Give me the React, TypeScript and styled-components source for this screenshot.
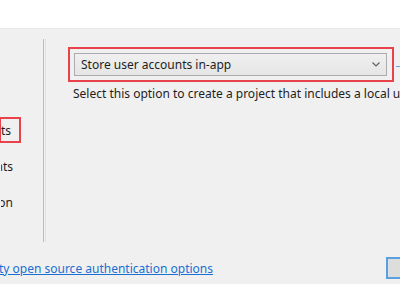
import styled, { createGlobalStyle } from "styled-components";

const GlobalStyle = createGlobalStyle`
  html, body {
    margin: 0;
    padding: 0;
    background: #f0f0f0;
  }
  body {
    font-family: "Noto Sans", "Open Sans", sans-serif;
    color: #1e1e1e;
  }
`;

const Page = styled.div`
  width: 400px;
  height: 284px;
  overflow: hidden;
  background: #f0f0f0;
`;

const TopBand = styled.div`
  height: 29px;
  background: #ffffff;
  border-bottom: 1px solid #e8e8e8;
  box-sizing: border-box;
`;

const Main = styled.div`
  display: flex;
  margin-top: 10px;
  height: 203px;
`;

const Sidebar = styled.ul`
  list-style: none;
  margin: 0;
  padding: 78px 0 0;
  width: 43px;
  flex-shrink: 0;
  display: flex;
  flex-direction: column;
  gap: 10px;
`;

const SideItem = styled.li<{ $selected?: boolean }>`
  width: 22px;
  height: 26px;
  box-sizing: border-box;
  margin-left: -1px;
  display: flex;
  align-items: center;
  justify-content: flex-end;
  padding-right: ${(p) => (p.$selected ? "8px" : "6px")};
  overflow: hidden;
  white-space: nowrap;
  font-size: 12px;
  border: 2px solid ${(p) => (p.$selected ? "#e8434a" : "transparent")};
`;

const Divider = styled.div`
  width: 1px;
  flex-shrink: 0;
  border-left: 1px solid #bdbdbd;
  border-right: 1px solid #e2e2e2;
`;

const Content = styled.div`
  flex: 1;
  min-width: 0;
  padding: 8px 0 0 22px;
`;

const PickerRow = styled.div`
  display: flex;
  align-items: center;
  gap: 2px;
`;

const Highlight = styled.div`
  width: 326px;
  box-sizing: border-box;
  border: 2px solid #e8434a;
  padding: 4px 5px 4px 4px;
  flex-shrink: 0;
`;

const Select = styled.div`
  height: 23px;
  box-sizing: border-box;
  border: 1px solid #acacac;
  background: linear-gradient(#f0f0f0, #e5e5e5);
  display: flex;
  align-items: center;
  justify-content: space-between;
  padding: 0 6px 0 6px;
  font-size: 12px;
  color: #1e1e1e;
`;

const HelpMark = styled.span`
  width: 5px;
  height: 1px;
  margin-top: 3px;
  background: #6ea6dc;
  flex-shrink: 0;
`;

const Description = styled.p`
  margin: 3px 0 0 5px;
  white-space: nowrap;
  font-size: 12px;
  color: #1e1e1e;
`;

const Footer = styled.div`
  display: flex;
  align-items: center;
  justify-content: space-between;
  margin-top: 15px;
  height: 22px;
`;

const LinkClip = styled.div`
  width: 213px;
  display: flex;
  justify-content: flex-end;
  overflow: hidden;
  white-space: nowrap;
`;

const FooterLink = styled.a`
  font-size: 12px;
  color: #1a6fd0;
  text-decoration: underline;
  flex-shrink: 0;
`;

const Button = styled.button`
  width: 75px;
  height: 22px;
  margin-right: -61px;
  box-sizing: border-box;
  border: 2px solid #5a9fe2;
  background: #dddddd;
  flex-shrink: 0;
`;

function Chevron() {
  return (
    <svg width="8" height="5" viewBox="0 0 8 5">
      <path d="M0.5 0.5 L4 4 L7.5 0.5" fill="none" stroke="#606060" strokeWidth="1.2" />
    </svg>
  );
}

const options = [
  { label: "Individual User Accounts", selected: true },
  { label: "Work And School Accounts", selected: false },
  { label: "Windows Authentication", selected: false },
];

export default function App() {
  return (
    <Page>
      <GlobalStyle />
      <TopBand />
      <Main>
        <Sidebar>
          {options.map((o) => (
            <SideItem key={o.label} $selected={o.selected}>
              {o.label}
            </SideItem>
          ))}
        </Sidebar>
        <Divider />
        <Content>
          <PickerRow>
            <Highlight>
              <Select>
                <span>Store user accounts in-app</span>
                <Chevron />
              </Select>
            </Highlight>
            <HelpMark />
          </PickerRow>
          <Description>
            Select this option to create a project that includes a local user accounts store.
          </Description>
        </Content>
      </Main>
      <Footer>
        <LinkClip>
          <FooterLink href="#">
            Learn more about third party open source authentication options
          </FooterLink>
        </LinkClip>
        <Button />
      </Footer>
    </Page>
  );
}
